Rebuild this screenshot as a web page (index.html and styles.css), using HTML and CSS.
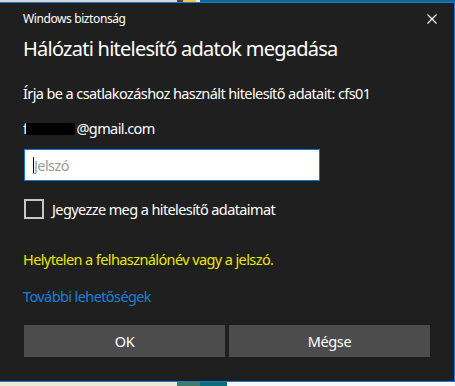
FILE: index.html
```html
<!DOCTYPE html>
<html lang="hu">
  <head>
    <meta charset="UTF-8" />
    <title>Windows biztonság</title>
    <link rel="stylesheet" href="styles.css">
  </head>

  <body>
    <div class="screen">
      <div class="strip strip-top">
        <span class="seg seg-gray"></span>
        <span class="seg seg-dark"></span>
        <span class="seg seg-yellow"></span>
        <span class="seg seg-white"></span>
        <span class="seg seg-teal"></span>
      </div>

      <div class="dialog">
        <div class="header">
          <span class="caption">Windows biztonság</span>
          <svg class="close" width="10" height="10" viewBox="0 0 10 10">
            <path d="M0.5 0.5 L9.5 9.5 M9.5 0.5 L0.5 9.5" stroke="#fff" stroke-width="1.1" fill="none" />
          </svg>
        </div>

        <h1 class="title">Hálózati hitelesítő adatok megadása</h1>

        <p class="line instruction">Írja be a csatlakozáshoz használt hitelesítő adatait: cfs01</p>

        <p class="line email">f<span class="redact"></span>@gmail.com</p>

        <div class="field">
          <span class="caret"></span>
          <span class="placeholder">Jelszó</span>
        </div>

        <div class="check-row">
          <span class="checkbox"></span>
          <span class="check-label">Jegyezze meg a hitelesítő adataimat</span>
        </div>

        <p class="line error">Helytelen a felhasználónév vagy a jelszó.</p>

        <p class="line more">További lehetőségek</p>

        <div class="buttons">
          <button class="btn">OK</button>
          <button class="btn">Mégse</button>
        </div>
      </div>

      <div class="strip strip-bottom">
        <span class="seg seg-beige"></span>
        <span class="seg seg-icons"></span>
        <span class="seg seg-teal2"></span>
        <span class="seg seg-light"></span>
      </div>
    </div>
  </body>
</html>
```

FILE: styles.css
```css
body {
  margin: 0;
  background-color: #f0f0f0;
  font-family: "Noto Sans", "Open Sans", sans-serif;
  color: #fff;
}

.screen {
  width: 455px;
  height: 386px;
  display: flex;
  flex-direction: column;
}

.strip {
  display: flex;
}

.strip-top {
  height: 2px;
}

.strip-bottom {
  height: 4px;
}

.seg {
  display: block;
  height: 100%;
}

.seg-gray { width: 177px; background-color: #d8d8d8; }
.seg-dark { width: 6px; background-color: #3a4a55; }
.seg-yellow { width: 13px; background-color: #f2c94c; }
.seg-white { width: 4px; background-color: #e8eef2; }
.seg-teal { flex: 1; background-color: #0d6a93; }

.seg-beige { width: 177px; background-color: #ece9d8; }
.seg-icons { width: 23px; background-color: #3f7a6a; }
.seg-teal2 { width: 27px; background-color: #0a6d7a; }
.seg-light { flex: 1; background-color: #f7f7f7; }

.dialog {
  flex: 1;
  background-color: #1f1f1f;
  border-top: 1px solid #1a7bd2;
  border-right: 1px solid #1a7bd2;
  border-bottom: 1px solid #1a7bd2;
  padding: 0 24px;
  display: flex;
  flex-direction: column;
}

.header {
  height: 32px;
  display: flex;
  align-items: center;
  justify-content: space-between;
}

.caption {
  font-size: 12px;
  line-height: 16px;
  letter-spacing: -0.4px;
  margin-left: -1px;
}

.close {
  margin-right: -7px;
}

.title {
  margin: 0 0 0 -1px;
  font-size: 20px;
  font-weight: 400;
  letter-spacing: -0.75px;
  line-height: 28px;
}

.line {
  margin: 0 0 0 -1px;
  font-size: 14.5px;
  letter-spacing: -0.6px;
  line-height: 20px;
}

.instruction {
  margin-top: 20px;
}

.email {
  margin-top: 15px;
}

.redact {
  display: inline-block;
  width: 49px;
  height: 12px;
  margin-left: -1px;
  margin-right: 1px;
  background-color: #000;
  vertical-align: -1px;
}

.field {
  margin-top: 11px;
  width: 296px;
  height: 32px;
  box-sizing: border-box;
  border: 1px solid #0a78d4;
  background-color: #fff;
  display: flex;
  align-items: center;
  padding-left: 8px;
}

.caret {
  width: 1px;
  height: 16px;
  background-color: #000;
}

.placeholder {
  font-size: 14.5px;
  letter-spacing: -0.6px;
  color: #9a9a9a;
}

.check-row {
  margin-top: 18px;
  height: 20px;
  display: flex;
  align-items: center;
  gap: 8px;
}

.checkbox {
  width: 20px;
  height: 20px;
  box-sizing: border-box;
  border: 2px solid #c6c6c6;
}

.check-label {
  font-size: 14.5px;
  letter-spacing: -0.6px;
}

.error {
  margin-top: 30px;
  color: #e8e800;
}

.more {
  margin-top: 17px;
  color: #1a80d6;
}

.buttons {
  margin-top: 19px;
  display: flex;
  gap: 4px;
}

.btn {
  flex: 1;
  height: 32px;
  border: none;
  background-color: #4c4c4c;
  color: #fff;
  font-family: "Noto Sans", "Open Sans", sans-serif;
  font-size: 14.5px;
  letter-spacing: -0.4px;
}
```
